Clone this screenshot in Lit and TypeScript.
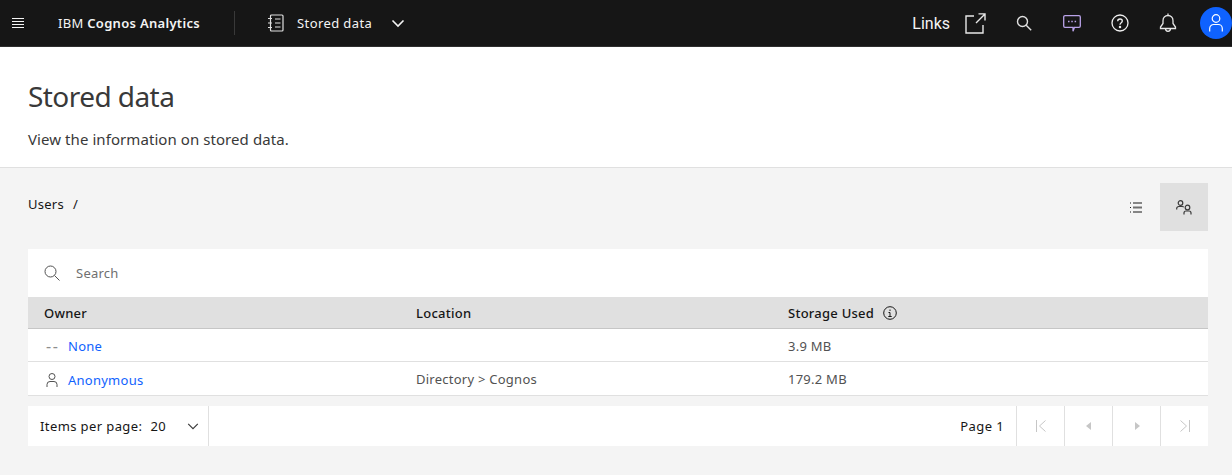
import { LitElement, html, css, svg } from "lit";
import { customElement } from "lit/decorators.js";

@customElement("app-root")
export class AppRoot extends LitElement {
  static styles = css`
    :host { display: block; width: 1232px; height: 475px; overflow: hidden; background: #f4f4f4; font-family: "Noto Sans", "Open Sans", sans-serif; color: #161616; }
    svg { display: block; flex: none; }
    .top { height: 47px; box-sizing: border-box; border-bottom: 1px solid #2e2e2e; background: #161616; color: #f4f4f4; display: flex; align-items: center; font-size: 13px; }
    .menu { width: 36px; display: flex; justify-content: center; margin-right: 22px; }
    .brand { width: 176px; font-weight: 400; font-size: 13px; letter-spacing: 0.3px; white-space: nowrap; }
    .brand b { font-weight: 600; }
    .sep { width: 1px; height: 24px; background: #393939; }
    .ctx { display: flex; align-items: center; margin-left: 33px; }
    .ctx .name { margin-left: 13px; width: 93px; white-space: nowrap; letter-spacing: 0.4px; }
    .right { margin-left: auto; display: flex; align-items: center; }
    .links { font-family: Roboto, sans-serif; font-size: 16px; color: #f4f4f4; margin-right: 15px; margin-left: 1px; }
    .tool { width: 48px; height: 46px; display: flex; align-items: center; justify-content: center; }
    .ext { margin-right: 14px; }
    .avatar { width: 32px; height: 32px; border-radius: 50%; background: #0f62fe; display: flex; align-items: center; justify-content: center; margin: 0 0 0 8px; }
    .head { height: 120px; background: #fff; border-bottom: 1px solid #e0e0e0; padding: 0 28px; display: flex; flex-direction: column; }
    h1 { margin: 31px 0 0; font-size: 28px; line-height: 36px; font-weight: 400; color: #393939; letter-spacing: -0.56px; }
    .desc { margin-top: 14px; font-size: 15px; line-height: 22px; color: #393939; letter-spacing: 0.07px; }
    .body { padding: 15px 24px 0 28px; font-size: 13px; letter-spacing: 0.25px; }
    .crumbrow { display: flex; justify-content: space-between; height: 48px; margin-bottom: 18px; }
    .crumb { line-height: 42px; color: #161616; display: flex; gap: 9px; }
    .views { display: flex; }
    .vbtn { width: 48px; height: 48px; display: flex; align-items: center; justify-content: center; }
    .vbtn.on { background: #e0e0e0; }
    .search { height: 48px; background: #fff; display: flex; align-items: center; padding-left: 16px; gap: 16px; color: #6f6f6f; }
    .row { display: grid; grid-template-columns: 372px 372px 1fr; padding-left: 16px; padding-top: 1px; align-items: center; background: #fff; color: #525252; border-bottom: 1px solid #e0e0e0; box-sizing: border-box; height: 33px; }
    .row.h2 { height: 34px; }
    .row.h2 .cell { margin-top: 2px; }
    .row.th { height: 32px; background: #e0e0e0; border-bottom: 1px solid #c6c6c6; font-weight: 500; color: #161616; }
    .cell { display: flex; align-items: center; }
    .ico { width: 24px; height: 16px; flex: none; display: flex; }
    .dash { color: #8d8d8d; font-size: 16px; line-height: 16px; letter-spacing: 1.5px; margin-left: 2px; width: 22px; }
    a { color: #0f62fe; }
    .info { margin-left: 9px; }
    .pager { margin-top: 10px; height: 40px; background: #fff; display: flex; align-items: center; color: #161616; }
    .ipp { width: 181px; height: 40px; box-sizing: border-box; padding-left: 12px; border-right: 1px solid #e0e0e0; display: flex; align-items: center; white-space: nowrap; letter-spacing: 0.4px; }
    .ipp .v { margin-left: 8px; width: 36px; }
    .pg { margin-left: auto; margin-right: 12px; letter-spacing: 0.4px; }
    .nav { width: 48px; height: 40px; box-sizing: border-box; border-left: 1px solid #e0e0e0; display: flex; align-items: center; justify-content: center; }
  `;

  private chevron(size: number, color: string, sw: number) {
    return svg`<svg width=${size} height=${size} viewBox="0 0 16 16" fill="none" stroke=${color} stroke-width=${sw}><path d="M2.500 5.500 8 11l5.500-5.500"/></svg>`;
  }

  render() {
    return html`
      <div class="top">
        <div class="menu"><svg width="12" height="10" viewBox="0 0 12 10" stroke="#f4f4f4" stroke-width="1"><path d="M0 .5h12M0 3.500h12M0 6.500h12M0 9.500h12"/></svg></div>
        <div class="brand">IBM <b>Cognos Analytics</b></div>
        <div class="sep"></div>
        <div class="ctx">
          <svg width="16" height="18" viewBox="0 0 16 18" fill="none" stroke="#e0e0e0" stroke-width="1.200"><rect x="2.500" y="1" width="12.500" height="16" rx="1"/><path d="M0 4.500h4M0 9h4M0 13.500h4M7 5h5.500M7 9h5.500M7 13h5.500"/></svg>
          <span class="name">Stored data</span>
          ${this.chevron(16, "#f4f4f4", 1.600)}
        </div>
        <div class="right">
          <span class="links">Links</span>
          <div class="ext"><svg width="21" height="21" viewBox="0 0 21 21" fill="none" stroke="#e8e8e8" stroke-width="1.400"><path d="M9 3H1v17h17v-8M13.500 .9H20v6.600M20 1l-9 9"/></svg></div>
          <div class="tool"><svg width="16" height="16" viewBox="0 0 16 16" fill="none" stroke="#e0e0e0" stroke-width="1.400"><circle cx="6.500" cy="6.500" r="5"/><path d="m10.200 10.200 5 5"/></svg></div>
          <div class="tool"><svg width="18" height="17" viewBox="0 0 18 17" fill="none" stroke="#b9a2e8" stroke-width="1.300"><path d="M2 .7h14A1.300 1.300 0 0 1 17.300 2v9a1.300 1.300 0 0 1-1.300 1.300h-4.500L10 16.300V12.300H2A1.300 1.300 0 0 1 .7 11V2A1.300 1.300 0 0 1 2 .7z"/><path d="M5 6.500h1.500M8.300 6.500h1.500M11.600 6.500h1.500" stroke-width="1.700"/></svg></div>
          <div class="tool"><svg width="18" height="18" viewBox="0 0 18 18" fill="none" stroke="#f0f0f0" stroke-width="1.300"><circle cx="9" cy="9" r="8"/><path d="M6.700 7.200C6.700 5.800 7.700 5 9 5s2.300.8 2.300 2.100c0 1.800-2.300 1.700-2.300 3.700"/><circle cx="9" cy="13" r=".6" fill="#f0f0f0"/></svg></div>
          <div class="tool"><svg width="18" height="20" viewBox="0 0 18 20" fill="none" stroke="#e8e8e8" stroke-width="1.300"><path d="M9 2.500c-3 0-5 2.200-5 5.200v2.800L1.500 14v1.500h15V14L14 10.500V7.700c0-3-2-5.200-5-5.200zM9 .5v2M6.500 15.500c0 1.700 1 2.800 2.500 2.800s2.500-1.100 2.500-2.800"/></svg></div>
          <div class="avatar"><svg width="14" height="18" viewBox="0 0 14 18" fill="none" stroke="#fff" stroke-width="1.200"><circle cx="7" cy="4.500" r="3.800"/><path d="M.7 17.500v-3A4 4 0 0 1 4.700 10.500h4.600a4 4 0 0 1 4 4v3"/></svg></div>
        </div>
      </div>
      <div class="head">
        <h1>Stored data</h1>
        <div class="desc">View the information on stored data.</div>
      </div>
      <div class="body">
        <div class="crumbrow">
          <div class="crumb"><span>Users</span><span>/</span></div>
          <div class="views">
            <div class="vbtn"><svg width="12" height="11" viewBox="0 0 12 11" stroke="#161616"><path d="M0 1h1M0 5.500h1M0 10h1M3 1h9M3 10h9"/><path d="M3 5.500h9" stroke="#6f6f6f" stroke-width="2"/></svg></div>
            <div class="vbtn on"><svg width="16" height="15" viewBox="0 0 16 15" fill="none" stroke="#393939" stroke-width="1.200"><circle cx="4.500" cy="3" r="2.300"/><path d="M.7 9.500V8.500a2 2 0 0 1 2-2h3.600a2 2 0 0 1 1.500 .7"/><circle cx="11.500" cy="7.500" r="2.300"/><path d="M8 14.500v-1.500a2 2 0 0 1 2-2h3a2 2 0 0 1 2 2v1.500"/></svg></div>
          </div>
        </div>
        <div class="search">
          <svg width="16" height="16" viewBox="0 0 16 16" fill="none" stroke="#525252" stroke-width="1"><circle cx="6.500" cy="6.500" r="5.500"/><path d="m10.500 10.500 5 5"/></svg>
          <span>Search</span>
        </div>
        <div class="row th">
          <div>Owner</div><div>Location</div>
          <div class="cell">Storage Used<svg class="info" width="14" height="14" viewBox="0 0 14 14" fill="none" stroke="#161616"><circle cx="7" cy="7" r="6.300"/><path d="M5.500 6.500H7v4M5.300 10.500h3.400M7 3.500v1.500"/></svg></div>
        </div>
        <div class="row">
          <div class="cell"><span class="dash">--</span><a>None</a></div><div></div><div>3.9 MB</div>
        </div>
        <div class="row h2">
          <div class="cell"><span class="ico"><svg width="16" height="16" viewBox="0 0 16 16" fill="none" stroke="#525252" stroke-width="1"><circle cx="8" cy="4.500" r="3"/><path d="M3 15v-2.500A3 3 0 0 1 6 9.500h4a3 3 0 0 1 3 3V15"/></svg></span><a>Anonymous</a></div>
          <div>Directory &gt; Cognos</div><div>179.2 MB</div>
        </div>
        <div class="pager">
          <div class="ipp"><span>Items per page:</span><span class="v">20</span>${this.chevron(14, "#393939", 1.300)}</div>
          <span class="pg">Page 1</span>
          <div class="nav"><svg width="12" height="12" viewBox="0 0 12 12" fill="none" stroke="#c6c6c6"><path d="M1.500 0v12M10.500 .5 4.500 6l6 5.500"/></svg></div>
          <div class="nav"><svg width="8" height="8" viewBox="0 0 8 8" fill="#c6c6c6"><path d="M6 0v8L1 4z"/></svg></div>
          <div class="nav"><svg width="8" height="8" viewBox="0 0 8 8" fill="#c6c6c6"><path d="M2 0v8l5-4z"/></svg></div>
          <div class="nav"><svg width="12" height="12" viewBox="0 0 12 12" fill="none" stroke="#c6c6c6"><path d="M10.500 0v12M1.500 .5 7.500 6l-6 5.500"/></svg></div>
        </div>
      </div>
    `;
  }
}
